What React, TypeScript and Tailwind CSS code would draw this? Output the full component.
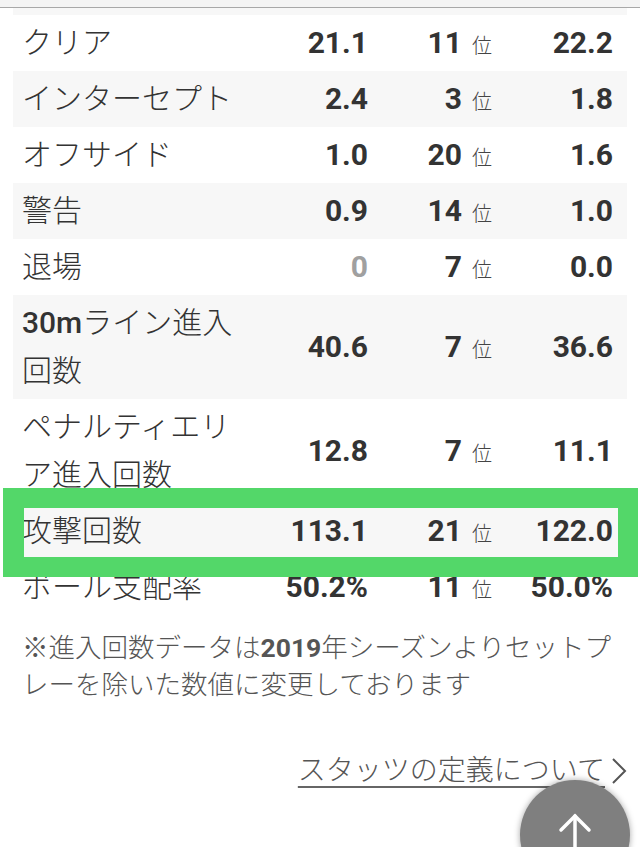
import React from 'react';

interface StatRow {
  label: React.ReactNode;
  value: string;
  rank: string;
  avg: string;
  muted?: boolean;
  striped?: boolean;
  highlight?: boolean;
}

const rows: StatRow[] = [
  { label: 'クリア', value: '21.1', rank: '11', avg: '22.2' },
  { label: 'インターセプト', value: '2.4', rank: '3', avg: '1.8', striped: true },
  { label: 'オフサイド', value: '1.0', rank: '20', avg: '1.6' },
  { label: '警告', value: '0.9', rank: '14', avg: '1.0', striped: true },
  { label: '退場', value: '0', rank: '7', avg: '0.0', muted: true },
  {
    label: (
      <>
        <span className="font-medium">30m</span>ライン進入
        <br />
        回数
      </>
    ),
    value: '40.6',
    rank: '7',
    avg: '36.6',
    striped: true,
  },
  {
    label: (
      <>
        ペナルティエリ
        <br />
        ア進入回数
      </>
    ),
    value: '12.8',
    rank: '7',
    avg: '11.1',
  },
  { label: '攻撃回数', value: '113.1', rank: '21', avg: '122.0', striped: true, highlight: true },
  { label: 'ボール支配率', value: '50.2%', rank: '11', avg: '50.0%' },
];

const App: React.FC = () => {
  return (
    <div
      className="relative w-[640px] h-[847px] overflow-hidden bg-white text-[#333]"
      style={{ fontFamily: "Roboto, 'Noto Sans CJK JP', sans-serif" }}
    >
      {/* header strip */}
      <div className="h-[8px] bg-[#f4f4f4] border-b border-[#a8a8a8]" />

      <div className="mx-[13px]">
        {/* tail of the previous row */}
        <div className="h-[7px] bg-[#f7f7f7]" />

        {rows.map((row, i) => (
          <div
            key={i}
            className={`relative flex items-center py-[4px] ${row.striped ? 'bg-[#f7f7f7]' : 'bg-white'}`}
          >
            <div className="w-[240px] pl-[9px] text-[30px] leading-[48px] font-light whitespace-nowrap">{row.label}</div>
            <div
              className={`w-[115px] text-right text-[30px] leading-[48px] font-bold ${row.muted ? 'text-[#a0a0a0]' : ''}`}
            >
              {row.value}
            </div>
            <div className="w-[124px] flex items-baseline justify-end">
              <span className="text-[30px] leading-[48px] font-bold">{row.rank}</span>
              <span className="ml-[10px] text-[20px] font-light text-[#444]">位</span>
            </div>
            <div className="flex-1 pr-[14px] text-right text-[30px] leading-[48px] font-bold">{row.avg}</div>

            {row.highlight && (
              <div className="absolute z-10 -top-[15px] -bottom-[18px] -left-[10px] -right-[11px] border-[20px] border-l-[21px] border-[#53d769] pointer-events-none" />
            )}
          </div>
        ))}
      </div>

      {/* note */}
      <p className="mt-[14px] px-[22px] text-[26.5px] leading-[37px] font-light text-[#555] whitespace-nowrap">
        ※進入回数データは<span className="font-bold">2019</span>年シーズンよりセットプ
        <br />
        レーを除いた数値に変更しております
      </p>

      {/* definitions link */}
      <div className="mt-[48px] pr-[12px] flex justify-end items-center text-[28px] leading-[40px] font-light text-[#555]">
        <a href="#" className="underline decoration-[2px] underline-offset-[6px] decoration-[#666]">
          スタッツの定義について
        </a>
        <svg className="ml-[5px]" width="18" height="30" viewBox="0 0 18 30" fill="none" stroke="#555" strokeWidth="2">
          <path d="M3 3 L15 15 L3 27" />
        </svg>
      </div>

      {/* back to top button */}
      <button className="absolute left-[520px] top-[780px] w-[110px] h-[110px] rounded-full bg-[#7f7f7f] shadow-[0_0_6px_rgba(0,0,0,0.35)] flex justify-center pt-[30px]">
        <svg width="40" height="40" viewBox="0 0 40 40" fill="none" stroke="white" strokeWidth="3.5" strokeLinecap="round">
          <path d="M20 6 L20 40" />
          <path d="M6 20 L20 6 L34 20" />
        </svg>
      </button>
    </div>
  );
};

export default App;
